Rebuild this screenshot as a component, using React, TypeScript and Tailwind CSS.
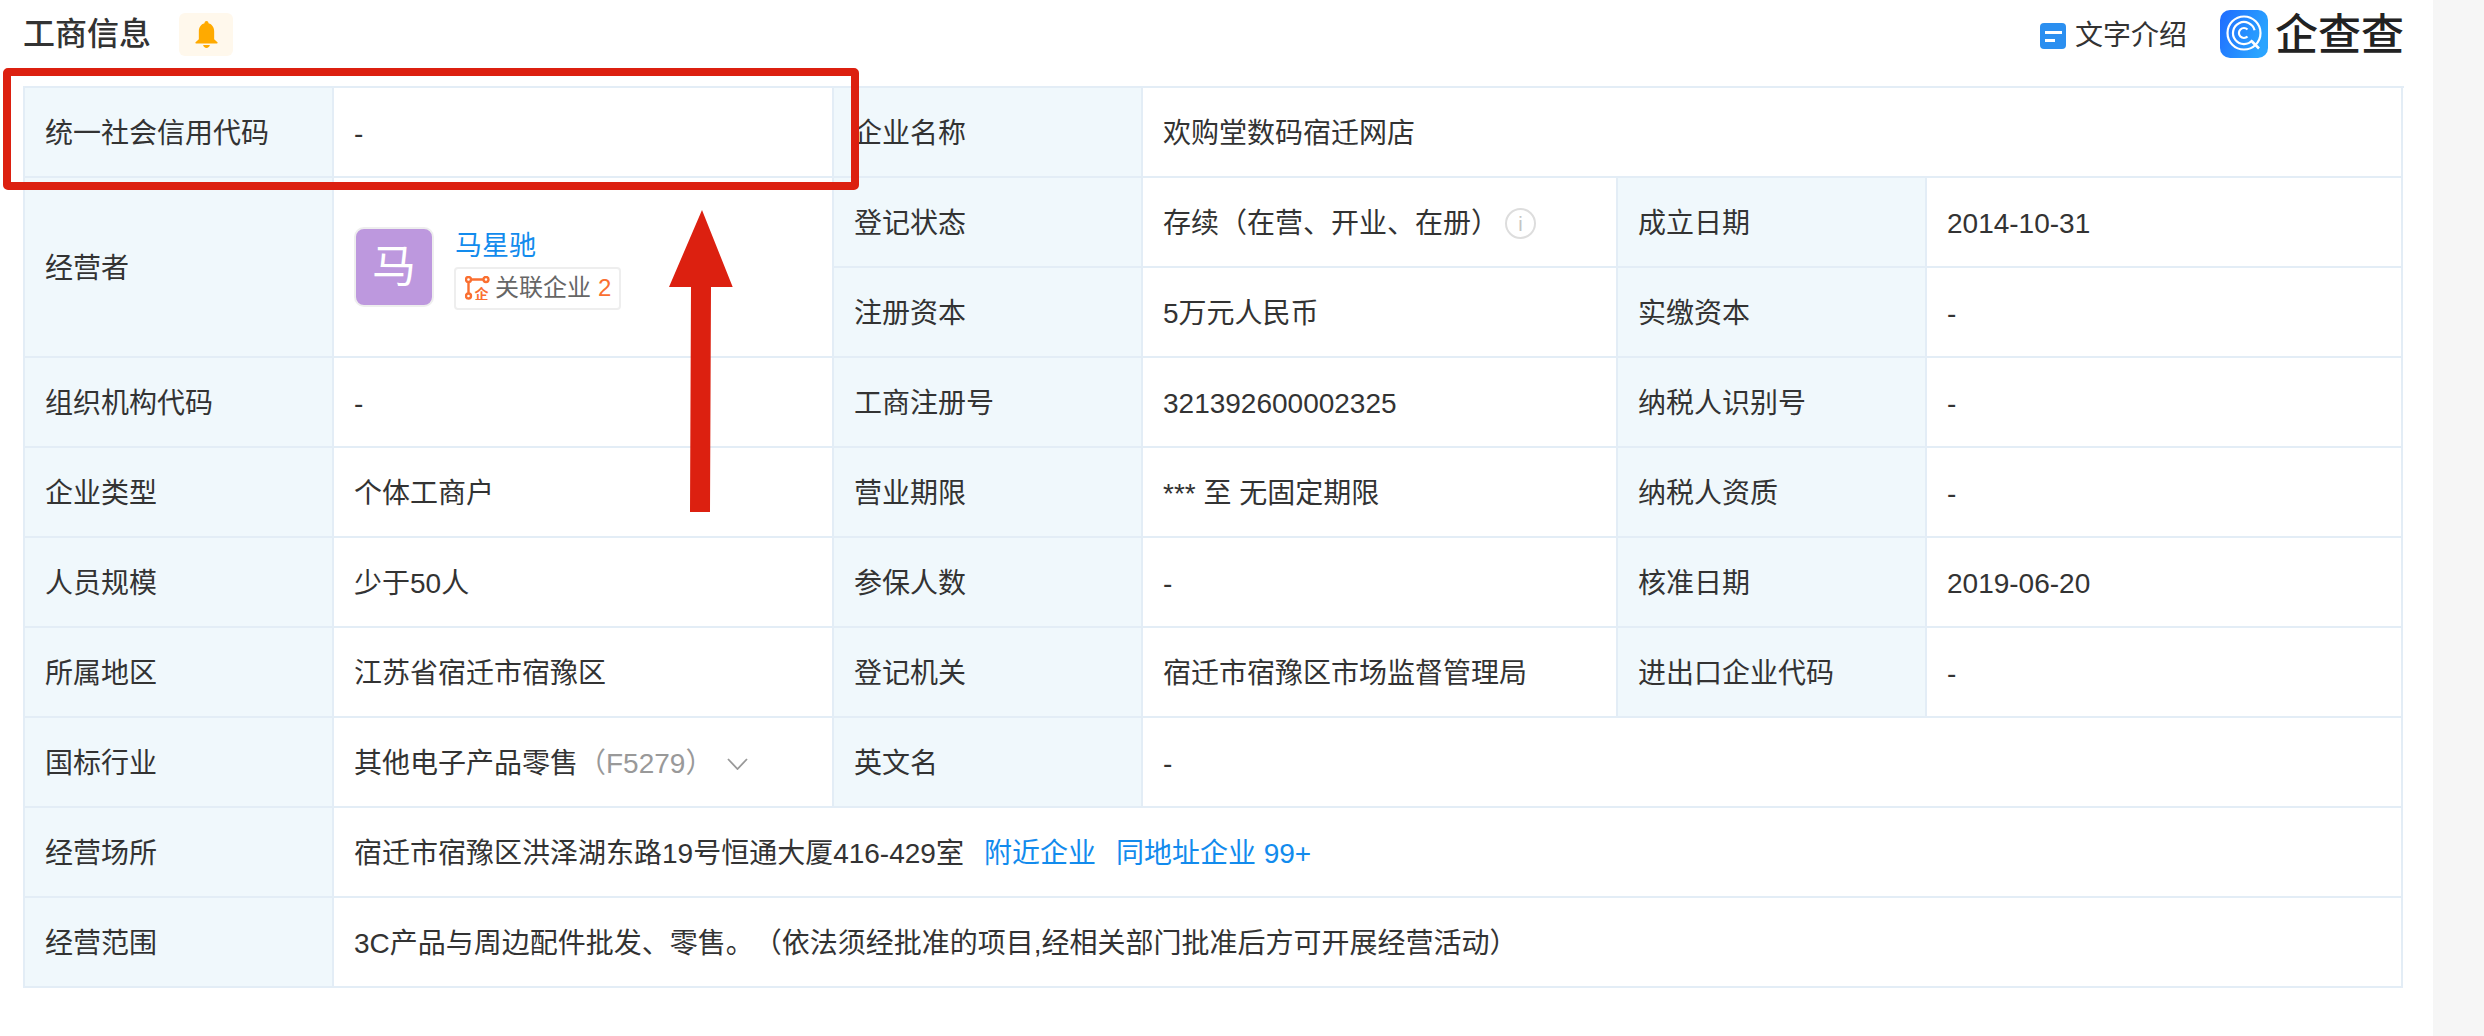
import React from 'react';

const fontStack = { fontFamily: '"Liberation Sans", "Noto Sans CJK SC", sans-serif' };

function Label({ children }: { children: React.ReactNode }) {
  return (
    <div className="flex items-center bg-[#f0f8fc] border-r-2 border-b-2 border-[#e3edf6] pl-[20px] pt-[3px] text-[28px] text-[#333333]">
      {children}
    </div>
  );
}

function Value({ children, className = '' }: { children: React.ReactNode; className?: string }) {
  return (
    <div className={`flex items-center border-r-2 border-b-2 border-[#e3edf6] pl-[20px] pt-[3px] text-[28px] text-[#333333] ${className}`}>
      {children}
    </div>
  );
}

function BellIcon() {
  return (
    <svg viewBox="0 0 24 28" className="w-[23px] h-[27px]">
      <path
        fill="#ffaa00"
        d="M12 0c1.2 0 2 .9 2.1 2.2C17.8 3.2 20 6.6 20 10.5V19l3.4 3.2c.5.5.2 1.3-.5 1.3H1.1c-.7 0-1-.8-.5-1.3L4 19v-8.500C4 6.600 6.200 3.200 9.900 2.200 10 .9 10.800 0 12 0z"
      />
      <path fill="#ffaa00" d="M8.500 25h7c-.3 1.800-1.700 3-3.500 3s-3.200-1.200-3.500-3z" />
    </svg>
  );
}

function LogoMark() {
  return (
    <svg viewBox="0 0 48 48" className="w-12 h-12">
      <defs>
        <linearGradient id="qccLogo" x1="0" y1="0" x2="1" y2="0.4">
          <stop offset="0" stopColor="#1f6bff" />
          <stop offset="1" stopColor="#2aa4ff" />
        </linearGradient>
      </defs>
      <rect width="48" height="48" rx="10" fill="url(#qccLogo)" />
      <circle cx="24" cy="23" r="16.500" fill="none" stroke="#fff" strokeWidth="2.200" />
      <path d="M34.600 20.200A11 11 0 1 0 32.400 30.100" fill="none" stroke="#fff" strokeWidth="2.200" />
      <path d="M27.500 19.500A5 5 0 1 0 27.500 26.500" fill="none" stroke="#fff" strokeWidth="2.200" />
      <path d="M32 31.500l7 7" stroke="#fff" strokeWidth="2.600" />
    </svg>
  );
}

function RelationIcon() {
  return (
    <svg viewBox="0 0 25 24" className="w-[25px] h-6 shrink-0" fill="none" stroke="#fa6f30" strokeWidth="2.400">
      <circle cx="3.500" cy="3.500" r="2.500" />
      <circle cx="21" cy="3.500" r="2.500" />
      <circle cx="3.500" cy="20" r="2.500" />
      <path d="M6 3.500h12.500M3.500 6v11.500" />
      <text x="9.500" y="22.500" fontSize="14" fontWeight="700" fill="#fa6f30" stroke="none">企</text>
    </svg>
  );
}

function InfoIcon() {
  return (
    <div className="ml-[6px] flex h-[31px] w-[31px] items-center justify-center rounded-full border-2 border-[#dddddd] text-[20px] leading-none text-[#c4c4c4]">
      i
    </div>
  );
}

function App() {
  return (
    <div className="relative flex h-[1036px] w-[2484px] overflow-hidden bg-white [text-spacing-trim:space-all]" style={fontStack}>
      <main className="w-[2433px] pl-[23px] pr-[29px]">
        {/* Header */}
        <div className="flex h-[68px] items-center justify-between">
          <div className="flex items-center">
            <h2 className="text-[32px] font-medium text-[#333333]">工商信息</h2>
            <div className="ml-[28px] flex h-[43px] w-[54px] items-center justify-center rounded-md bg-[#fff8ec]">
              <BellIcon />
            </div>
          </div>
          <div className="flex items-center">
            <div className="flex items-center pt-[4px]">
              <div className="flex h-[26px] w-[26px] flex-col justify-center gap-[5px] rounded-[4px] bg-[#2b8ff0] pl-[5px]">
                <div className="h-[3px] w-[17px] bg-white" />
                <div className="h-[3px] w-[10px] bg-white" />
              </div>
              <span className="ml-[9px] text-[28px] text-[#333333]">文字介绍</span>
            </div>
            <div className="ml-[33px]">
              <LogoMark />
            </div>
            <span className="ml-[7px] pt-[2px] text-[43px] leading-none font-medium text-[#222222]">企查查</span>
          </div>
        </div>

        {/* Table */}
        <div className="mt-[18px] grid grid-cols-[309px_500px_309px_475px_309px_476px] grid-rows-[repeat(10,90px)] border-t-2 border-l-2 border-[#e3edf6]">
          <Label>统一社会信用代码</Label>
          <Value>-</Value>
          <Label>企业名称</Label>
          <Value className="col-span-3">欢购堂数码宿迁网店</Value>

          <div className="row-span-2 flex items-center bg-[#f0f8fc] border-r-2 border-b-2 border-[#e3edf6] pl-[20px] pt-[3px] text-[28px] text-[#333333]">
            经营者
          </div>
          <div className="row-span-2 flex items-center border-r-2 border-b-2 border-[#e3edf6] pl-[20px]">
            <div className="flex h-20 w-20 items-center justify-center rounded-[10px] border-2 border-[#eeeeee] bg-[#bd98de] text-[44px] text-white">
              马
            </div>
            <div className="ml-[20px] flex flex-col pt-[3px]">
              <span className="ml-[1px] text-[27px] leading-[36px] text-[#128bed]">马星驰</span>
              <div className="mt-[3px] flex h-[43px] w-[167px] items-center rounded-[4px] border-2 border-[#eeeeee] pl-[9px] text-[24px] text-[#666666]">
                <RelationIcon />
                <span className="ml-[5px]">关联企业</span>
                <span className="ml-[7px] text-[#fa6f30]">2</span>
              </div>
            </div>
          </div>
          <Label>登记状态</Label>
          <Value>
            存续（在营、开业、在册）
            <InfoIcon />
          </Value>
          <Label>成立日期</Label>
          <Value>2014-10-31</Value>

          <Label>注册资本</Label>
          <Value>5万元人民币</Value>
          <Label>实缴资本</Label>
          <Value>-</Value>

          <Label>组织机构代码</Label>
          <Value>-</Value>
          <Label>工商注册号</Label>
          <Value>321392600002325</Value>
          <Label>纳税人识别号</Label>
          <Value>-</Value>

          <Label>企业类型</Label>
          <Value>个体工商户</Value>
          <Label>营业期限</Label>
          <Value>*** 至 无固定期限</Value>
          <Label>纳税人资质</Label>
          <Value>-</Value>

          <Label>人员规模</Label>
          <Value>少于50人</Value>
          <Label>参保人数</Label>
          <Value>-</Value>
          <Label>核准日期</Label>
          <Value>2019-06-20</Value>

          <Label>所属地区</Label>
          <Value>江苏省宿迁市宿豫区</Value>
          <Label>登记机关</Label>
          <Value>宿迁市宿豫区市场监督管理局</Value>
          <Label>进出口企业代码</Label>
          <Value>-</Value>

          <Label>国标行业</Label>
          <Value>
            其他电子产品零售
            <span className="text-[#999999]">（F5279）</span>
            <svg viewBox="0 0 21 12" className="ml-[14px] h-3 w-[21px]" fill="none" stroke="#999999" strokeWidth="1.800">
              <path d="M1 1l9.500 10L20 1" />
            </svg>
          </Value>
          <Label>英文名</Label>
          <Value className="col-span-3">-</Value>

          <Label>经营场所</Label>
          <Value className="col-span-5">
            宿迁市宿豫区洪泽湖东路19号恒通大厦416-429室
            <span className="ml-[20px] text-[#128bed]">附近企业</span>
            <span className="ml-[20px] text-[#128bed]">同地址企业 99+</span>
          </Value>

          <Label>经营范围</Label>
          <Value className="col-span-5">3C产品与周边配件批发、零售。（依法须经批准的项目,经相关部门批准后方可开展经营活动）</Value>
        </div>
      </main>
      <aside className="flex-1 bg-[#f6f6f6]" />

      {/* Red annotation over the screenshot */}
      <div className="absolute left-[3px] top-[68px] h-[122px] w-[856px] rounded-[5px] border-[8px] border-[#dc2010]" />
      <svg className="absolute left-[660px] top-[205px] h-[315px] w-[80px]" viewBox="0 0 80 315">
        <path fill="#dc2010" d="M42 5L72.700 82H51L50 307H30L31 82H9z" />
      </svg>
    </div>
  );
}

export default App;
